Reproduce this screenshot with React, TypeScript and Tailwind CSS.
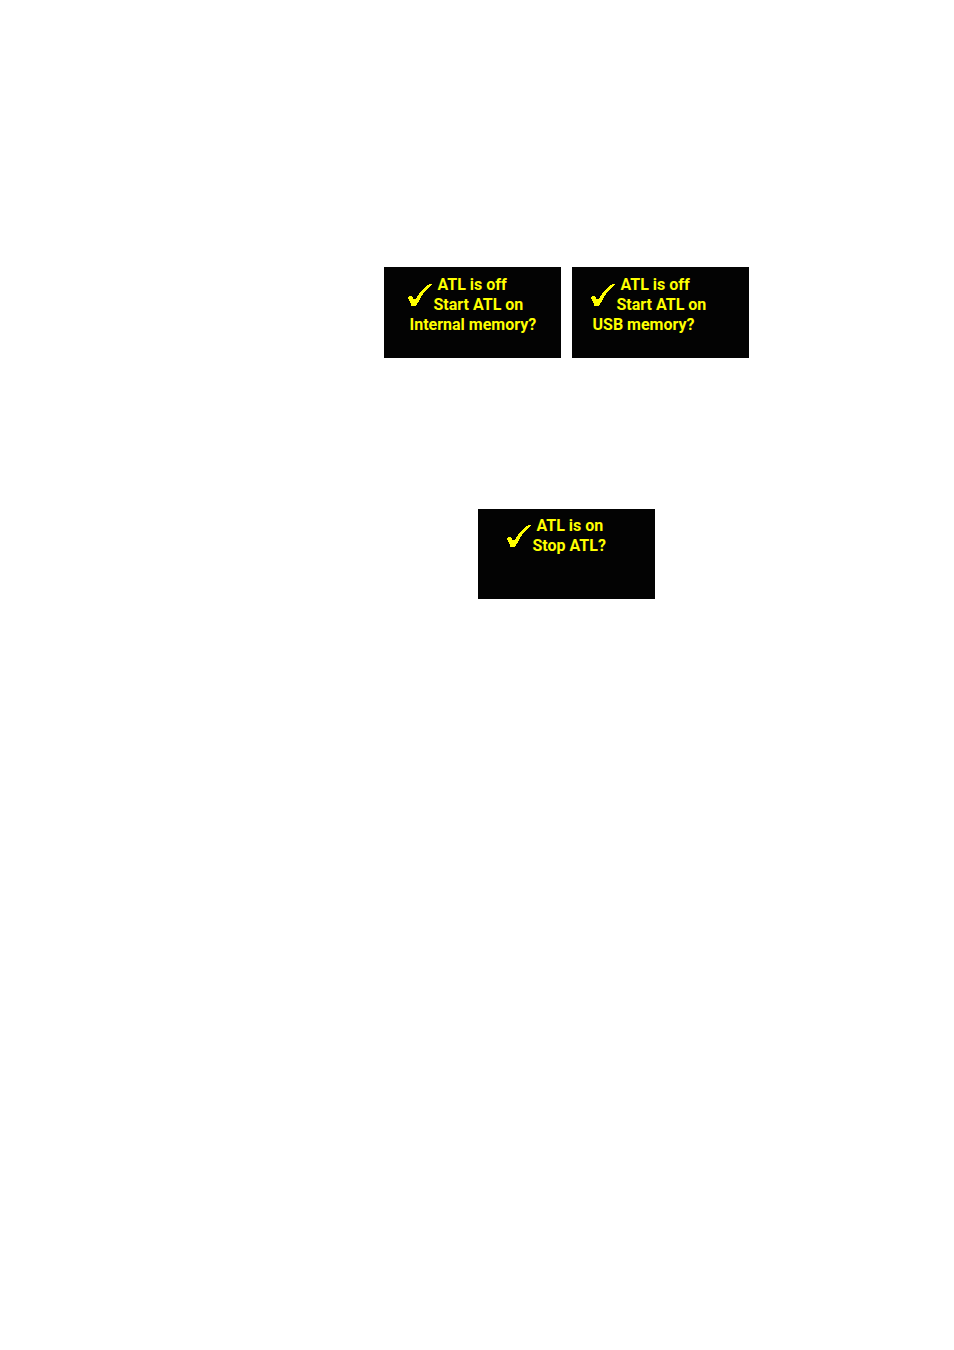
type ScreenProps = {
  lines: [string, string]
  footer?: string
  className: string
}

function CheckMark() {
  return (
    <svg viewBox="0 0 24 24" className="mt-2 h-6 w-6 shrink-0" fill="#ffff00" aria-hidden="true">
      <path d="M0 14H1V13H4V14H5V16H8V15H9V13H10V12H11V10H12V9H13V8H14V7H15V6H16V5H17V4H18V3H19V2H21V1H24V2H23V3H22V4H21V5H20V6H19V7H18V8H17V9H16V10H15V12H14V13H13V15H12V17H11V19H10V20H9V22H8V23H3V20H2V18H1V16H0Z" />
    </svg>
  )
}

// One display of the device: tick on the left, prompt lines beside and below it.
function Screen({ lines, footer, className }: ScreenProps) {
  return (
    <section
      className={`w-[177px] bg-[#030303] font-['Roboto','Liberation_Sans',sans-serif] text-base leading-5 font-bold whitespace-nowrap text-[#ffff00] ${className}`}
    >
      <div className="flex">
        <CheckMark />
        <div className="pl-0.5">
          <p className="pl-1">{lines[0]}</p>
          <p>{lines[1]}</p>
        </div>
      </div>
      {footer && <p className="pl-0.5">{footer}</p>}
    </section>
  )
}

export default function App() {
  return (
    <main className="min-h-screen bg-white pt-[267px] pl-[178px]">
      <div className="flex justify-center gap-[11px]">
        <Screen
          lines={['ATL is off', 'Start ATL on']}
          footer="Internal memory?"
          className="pt-2 pb-[23px] pl-6"
        />
        <Screen
          lines={['ATL is off', 'Start ATL on']}
          footer="USB memory?"
          className="pt-2 pb-[23px] pl-[19px]"
        />
      </div>
      <div className="mt-[151px] flex justify-center">
        <Screen lines={['ATL is on', 'Stop ATL?']} className="pt-[7px] pb-[43px] pl-[29px]" />
      </div>
    </main>
  )
}
